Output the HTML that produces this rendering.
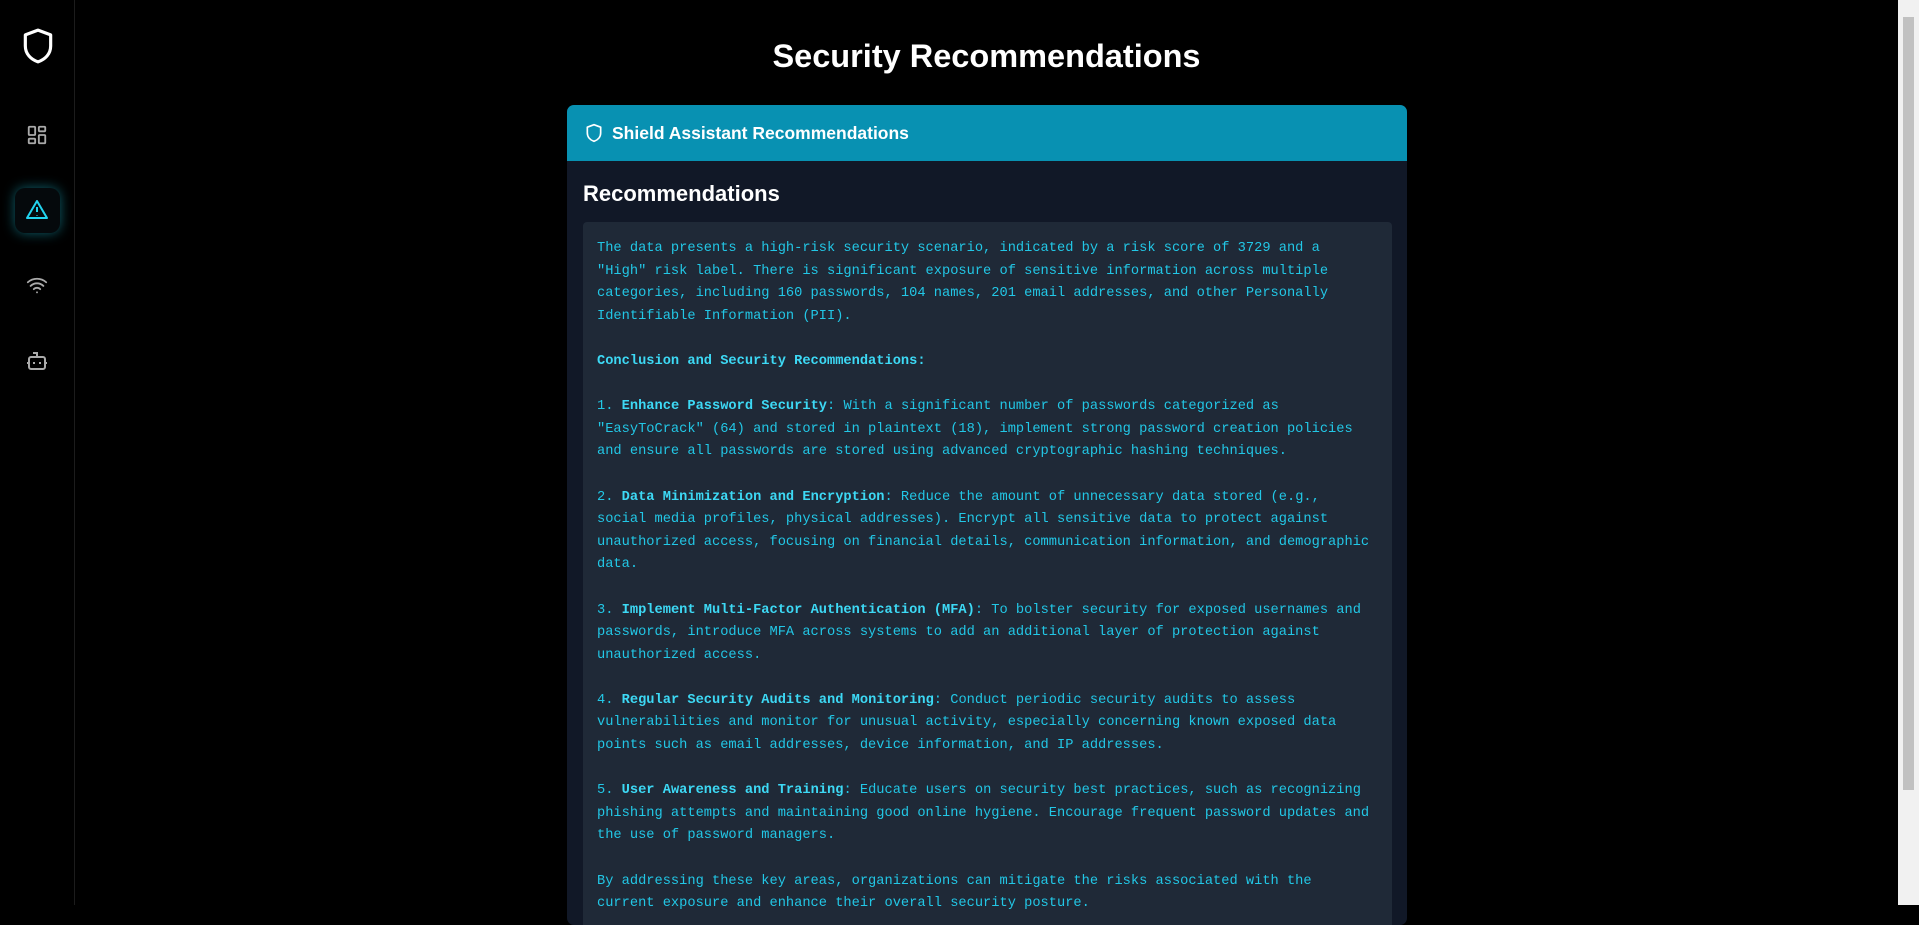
<!DOCTYPE html>
<html><head><meta charset="utf-8"><style>
*{margin:0;padding:0;box-sizing:border-box}
html,body{width:1919px;height:905px;overflow:hidden;background:#000;font-family:"Liberation Sans",sans-serif}
.side{position:absolute;left:0;top:0;width:75px;height:905px;border-right:1px solid #1c1c1c;background:#000}
.side svg{position:absolute}
.act{position:absolute;left:15px;top:188px;width:45px;height:45px;border-radius:10px;background:#05090c;box-shadow:0 0 12px rgba(34,211,238,.45)}
h1{position:absolute;left:75px;width:1823px;text-align:center;top:38px;color:#fff;font-size:32.5px;font-weight:bold}
.card{position:absolute;left:567px;top:105px;width:840px;height:820px;background:#111827;border-radius:7px;overflow:hidden}
.hd{height:56px;background:#0891b2;color:#fff;font-size:17.5px;font-weight:bold;padding-left:45px;line-height:56px;position:relative}
.hd svg{position:absolute;left:17px;top:17px}
h2{color:#fff;font-size:22px;font-weight:bold;position:absolute;left:16px;top:76px}
.box{position:absolute;left:16px;top:117px;width:809px;height:720px;background:#1f2937;border-radius:4px;padding:16px 14px;color:#22c7e6;font-family:"Liberation Mono",monospace;font-size:13.7px;line-height:22.6px;white-space:pre}
b{color:#3dd9f5}
.sb{position:absolute;left:1898px;top:0;width:21px;height:905px;background:#f1f1f1}
.th{position:absolute;left:1903px;top:17px;width:11px;height:773px;background:#c1c1c1}
</style></head><body>
<div class="side">
<svg style="left:19px;top:26px" width="38" height="40" viewBox="0 0 24 24" fill="none" stroke="#fff" stroke-width="2" stroke-linejoin="round"><path d="M12 2l8 3v7c0 5-3.5 8.5-8 10-4.5-1.5-8-5-8-10V5z"/></svg>
<svg style="left:26px;top:124px" width="22" height="22" viewBox="0 0 24 24" fill="none" stroke="#aaa" stroke-width="2"><rect x="3" y="3" width="7" height="9" rx="1"/><rect x="14" y="3" width="7" height="5" rx="1"/><rect x="14" y="12" width="7" height="9" rx="1"/><rect x="3" y="16" width="7" height="5" rx="1"/></svg>
<div class="act"></div>
<svg style="left:25px;top:198px" width="24" height="24" viewBox="0 0 24 24" fill="none" stroke="#22d3ee" stroke-width="2" stroke-linejoin="round"><path d="M12 3L2 20h20z"/><path d="M12 9v5M12 17v.5"/></svg>
<svg style="left:25px;top:274px" width="24" height="22" viewBox="0 0 24 24" fill="none" stroke="#aaa" stroke-width="2" stroke-linecap="round"><path d="M2 9a15 15 0 0 1 20 0M5 13a10 10 0 0 1 14 0M8.5 16.5a5 5 0 0 1 7 0M12 20h.01"/></svg>
<svg style="left:25px;top:349px" width="24" height="24" viewBox="0 0 24 24" fill="none" stroke="#aaa" stroke-width="2"><path d="M12 8V4H8"/><rect x="4" y="8" width="16" height="12" rx="2"/><path d="M2 14h2M20 14h2M9 13v2M15 13v2"/></svg>
</div>
<h1>Security Recommendations</h1>
<div class="card">
<div class="hd"><svg width="20" height="22" viewBox="0 0 24 24" fill="none" stroke="#fff" stroke-width="2" stroke-linejoin="round"><path d="M12 2l8 3v7c0 5-3.5 8.5-8 10-4.5-1.5-8-5-8-10V5z"/></svg>Shield Assistant Recommendations</div>
<h2>Recommendations</h2>
<div class="box">The data presents a high-risk security scenario, indicated by a risk score of 3729 and a
"High" risk label. There is significant exposure of sensitive information across multiple
categories, including 160 passwords, 104 names, 201 email addresses, and other Personally
Identifiable Information (PII).

<b>Conclusion and Security Recommendations:</b>

1. <b>Enhance Password Security</b>: With a significant number of passwords categorized as
"EasyToCrack" (64) and stored in plaintext (18), implement strong password creation policies
and ensure all passwords are stored using advanced cryptographic hashing techniques.

2. <b>Data Minimization and Encryption</b>: Reduce the amount of unnecessary data stored (e.g.,
social media profiles, physical addresses). Encrypt all sensitive data to protect against
unauthorized access, focusing on financial details, communication information, and demographic
data.

3. <b>Implement Multi-Factor Authentication (MFA)</b>: To bolster security for exposed usernames and
passwords, introduce MFA across systems to add an additional layer of protection against
unauthorized access.

4. <b>Regular Security Audits and Monitoring</b>: Conduct periodic security audits to assess
vulnerabilities and monitor for unusual activity, especially concerning known exposed data
points such as email addresses, device information, and IP addresses.

5. <b>User Awareness and Training</b>: Educate users on security best practices, such as recognizing
phishing attempts and maintaining good online hygiene. Encourage frequent password updates and
the use of password managers.

By addressing these key areas, organizations can mitigate the risks associated with the
current exposure and enhance their overall security posture.</div>
</div>
<div class="sb"></div><div class="th"></div>
</body></html>
